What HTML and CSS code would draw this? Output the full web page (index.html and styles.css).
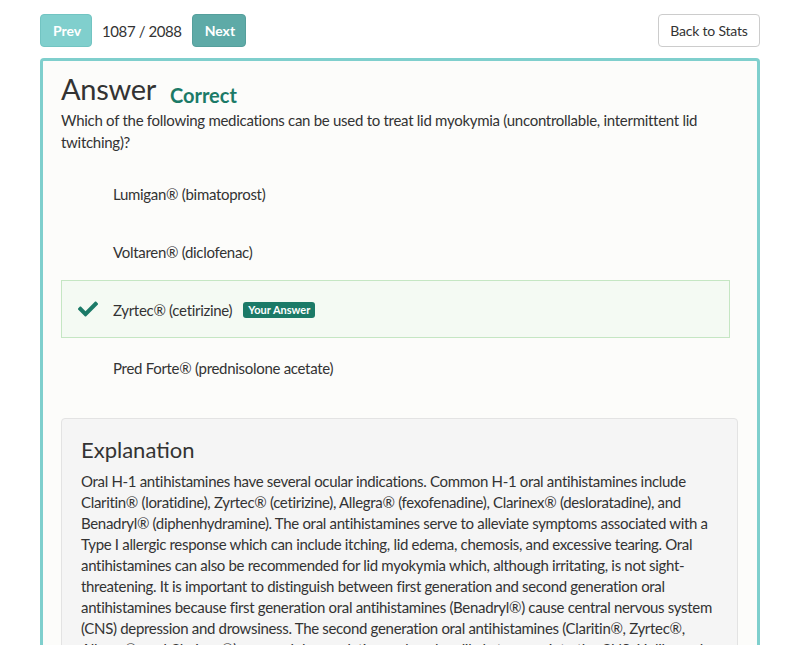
FILE: index.html
```html
<!DOCTYPE html>
<html>
<head>
<meta charset="utf-8">
<link rel="stylesheet" href="styles.css">
</head>
<body>
<div class="page">
  <div class="toolbar">
    <div class="nav">
      <button class="btn btn-prev">Prev</button>
      <span class="counter">1087 / 2088</span>
      <button class="btn btn-next">Next</button>
    </div>
    <button class="btn btn-back">Back to Stats</button>
  </div>
  <div class="card">
    <div class="heading">
      <h1 class="title">Answer</h1>
      <span class="status">Correct</span>
    </div>
    <p class="question">Which of the following medications can be used to treat lid myokymia (uncontrollable, intermittent lid twitching)?</p>
    <ul class="options">
      <li class="option"><span class="mark"></span><span class="label">Lumigan® (bimatoprost)</span></li>
      <li class="option"><span class="mark"></span><span class="label">Voltaren® (diclofenac)</span></li>
      <li class="option selected"><span class="mark"><svg viewBox="0 0 512 512" width="20" height="20"><path fill="#1b7a67" d="M173.9 439.4L7.5 273c-10-10-10-26.2 0-36.2l36.2-36.2c10-10 26.2-10 36.2 0L192 312.7 432.1 72.6c10-10 26.2-10 36.2 0l36.2 36.2c10 10 10 26.2 0 36.2L210.1 439.4c-10 10-26.2 10-36.2 0z"/></svg></span><span class="label">Zyrtec® (cetirizine)</span><span class="badge">Your Answer</span></li>
      <li class="option"><span class="mark"></span><span class="label">Pred Forte® (prednisolone acetate)</span></li>
    </ul>
    <div class="explanation">
      <h2 class="exp-title">Explanation</h2>
      <p class="exp-text">Oral H-1 antihistamines have several ocular indications. Common H-1 oral antihistamines include Claritin® (loratidine), Zyrtec® (cetirizine), Allegra® (fexofenadine), Clarinex® (desloratadine), and Benadryl® (diphenhydramine). The oral antihistamines serve to alleviate symptoms associated with a Type I allergic response which can include itching, lid edema, chemosis, and excessive tearing. Oral antihistamines can also be recommended for lid myokymia which, although irritating, is not sight-threatening. It is important to distinguish between first generation and second generation oral antihistamines because first generation oral antihistamines (Benadryl®) cause central nervous system (CNS) depression and drowsiness. The second generation oral antihistamines (Claritin®, Zyrtec®, Allegra®, and Clarinex®) are much less sedating and are less likely to cross into the CNS. Unlike oral NSAIDs, these medications are well tolerated by most patients.</p>
    </div>
  </div>
</div>
</body>
</html>
```
FILE: styles.css
```css
* { box-sizing: border-box; }
html, body { margin: 0; padding: 0; background: #fff; }
body { font-family: Lato, "Open Sans", sans-serif; color: #333; overflow: hidden; height: 645px; }
.page { padding: 14px 40px 0 40px; }
.toolbar { display: flex; justify-content: space-between; align-items: center; height: 33px; }
.nav { display: flex; align-items: center; gap: 10px; }
.btn { font-family: inherit; font-size: 14px; height: 33px; border-radius: 4px; padding: 0 12px; border: 1px solid transparent; cursor: pointer; }
.btn-prev { background: #80cfcd; border-color: #72c4c2; color: #fff; font-weight: 700; width: 52px; }
.btn-next { background: #5eaaa7; border-color: #559f9c; color: #fff; font-weight: 700; width: 54px; }
.counter { font-size: 15px; color: #333; letter-spacing: -0.4px; }
.btn-back { background: #fff; border-color: #ccc; color: #333; width: 102px; padding: 0; letter-spacing: -0.2px; }
.card { margin-top: 11px; border: 3px solid #7fcfcd; border-bottom: none; border-radius: 4px 4px 0 0; background: #fcfcfa; padding: 8px 19px 0 18px; height: 600px; }
.heading { display: flex; align-items: baseline; gap: 14px; }
.title { margin: 0; font-size: 29px; font-weight: 400; line-height: 40px; color: #333; letter-spacing: -0.3px; }
.status { font-size: 20px; font-weight: 700; color: #1b7a67; position: relative; top: 3px; }
.question { margin: 0; font-size: 15px; line-height: 22px; color: #333; letter-spacing: -0.28px; }
.options { list-style: none; margin: 11px 8px 0 0; padding: 0; }
.option { display: flex; align-items: center; height: 58px; border: 1px solid transparent; font-size: 15px; letter-spacing: -0.3px; }
.option .label { position: relative; top: 1px; }
.option .mark { width: 51px; display: flex; justify-content: center; padding-left: 0; }
.option.selected { background: #f4faf3; border-color: #c5e6c3; }
.badge { margin-left: 11px; background: #1b7a67; color: #fff; font-size: 11px; font-weight: 700; padding: 2px 5px; border-radius: 3px; line-height: 12px; letter-spacing: 0; position: relative; top: 1px; }
.explanation { margin-top: 22px; background: #f5f5f5; border: 1px solid #e3e3e3; border-radius: 4px; padding: 16px 19px; }
.exp-title { margin: 0 0 6px 0; font-size: 22px; font-weight: 400; line-height: 30px; color: #333; }
.exp-text { margin: 0; font-size: 15px; line-height: 21px; color: #333; letter-spacing: -0.32px; }
```
